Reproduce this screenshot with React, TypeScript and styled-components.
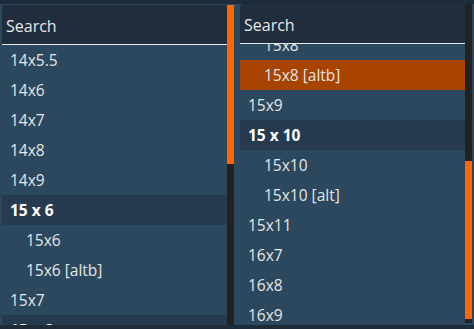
import React from 'react';
import styled, { createGlobalStyle } from 'styled-components';

const GlobalStyle = createGlobalStyle`
  html, body {
    margin: 0;
    padding: 0;
    background: #1e2b39;
  }
  body {
    font-family: "Open Sans", "Noto Sans", sans-serif;
    font-size: 15.5px;
  }
`;

const Page = styled.div`
  width: 474px;
  height: 329px;
  box-sizing: border-box;
  background: #2b485e;
  border-top: 4px solid #1e2b39;
  border-bottom: 4px solid #1e2b39;
  display: flex;
  align-items: flex-start;
  gap: 6px;
  padding-left: 2px;
  overflow: hidden;
`;

const Panel = styled.div<{ top: number; height: number }>`
  margin-top: ${(p) => p.top}px;
  height: ${(p) => p.height}px;
  width: 232px;
  display: flex;
  border-radius: 4px 0 0 4px;
  overflow: hidden;
  background: #2b485e;
`;

const Column = styled.div`
  flex: 1;
  display: flex;
  flex-direction: column;
  min-width: 0;
`;

const SearchBar = styled.div`
  height: 39px;
  flex: none;
  background: #1f2d3d;
  border-bottom: 1px solid #e8e8e8;
  color: #e8e8e8;
  font-size: 16px;
  display: flex;
  align-items: center;
  padding: 2px 0 0 4px;
  box-sizing: border-box;
  height: 40px;
  position: relative;
  z-index: 1;
`;

const List = styled.div`
  flex: 1;
  overflow: hidden;
`;

const Inner = styled.div<{ offset: number }>`
  margin-top: ${(p) => -p.offset}px;
`;

const Row = styled.div<{ indent?: boolean; selected?: boolean }>`
  height: 30px;
  display: flex;
  align-items: center;
  padding-left: ${(p) => (p.indent ? 24 : 8)}px;
  color: #e6e6e6;
  background: ${(p) => (p.selected ? '#a84300' : 'transparent')};
`;

const GroupRow = styled.div`
  height: 30px;
  display: flex;
  align-items: center;
  padding-left: 8px;
  background: #263b50;
  color: #ffffff;
  font-weight: 700;
`;

const Track = styled.div`
  width: 7px;
  flex: none;
  background: #222222;
  display: flex;
  flex-direction: column;
`;

const Thumb = styled.div<{ start: number; size: number }>`
  margin-top: ${(p) => p.start}px;
  height: ${(p) => p.size}px;
  background: #ff6600;
`;

type Item = { label: string; group?: boolean; indent?: boolean; selected?: boolean };

const leftItems: Item[] = [
  { label: '14x5.5' },
  { label: '14x6' },
  { label: '14x7' },
  { label: '14x8' },
  { label: '14x9' },
  { label: '15 x 6', group: true },
  { label: '15x6', indent: true },
  { label: '15x6 [altb]', indent: true },
  { label: '15x7' },
  { label: '15 x 8', group: true },
];

const rightItems: Item[] = [
  { label: '15x8', indent: true },
  { label: '15x8 [altb]', indent: true, selected: true },
  { label: '15x9' },
  { label: '15 x 10', group: true },
  { label: '15x10', indent: true },
  { label: '15x10 [alt]', indent: true },
  { label: '15x11' },
  { label: '16x7' },
  { label: '16x8' },
  { label: '16x9' },
];

const Picker: React.FC<{
  items: Item[];
  top: number;
  height: number;
  offset: number;
  thumbStart: number;
  thumbSize: number;
}> = ({ items, top, height, offset, thumbStart, thumbSize }) => (
  <Panel top={top} height={height}>
    <Column>
      <SearchBar>Search</SearchBar>
      <List>
        <Inner offset={offset}>
          {items.map((it) =>
            it.group ? (
              <GroupRow key={it.label}>{it.label}</GroupRow>
            ) : (
              <Row key={it.label} indent={it.indent} selected={it.selected}>
                {it.label}
              </Row>
            )
          )}
        </Inner>
      </List>
    </Column>
    <Track>
      <Thumb start={thumbStart} size={thumbSize} />
    </Track>
  </Panel>
);

export default function App() {
  return (
    <>
      <GlobalStyle />
      <Page>
        <Picker items={leftItems} top={1} height={320} offset={0} thumbStart={0} thumbSize={159} />
        <Picker items={rightItems} top={0} height={319} offset={14} thumbStart={157} thumbSize={158} />
      </Page>
    </>
  );
}
